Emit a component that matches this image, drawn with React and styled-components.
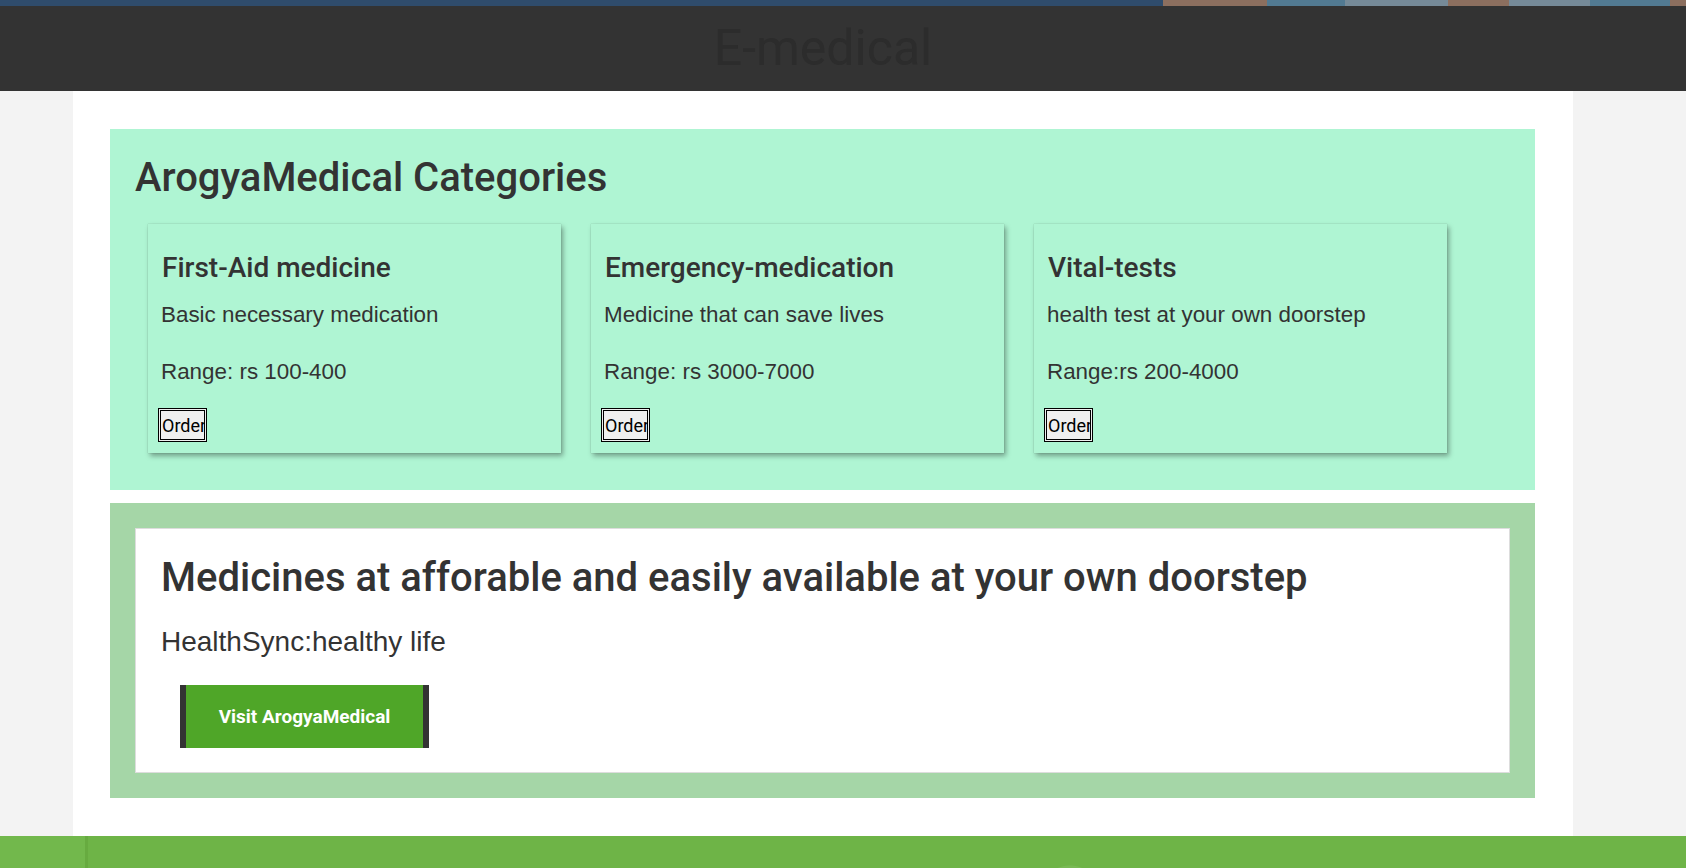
import React from "react";
import styled, { createGlobalStyle } from "styled-components";

const GlobalStyle = createGlobalStyle`
  body {
    margin: 0;
    background-color: #f3f3f3;
    font-family: Roboto, "Liberation Sans", Arial, sans-serif;
    color: #333;
  }
`;

const categories = [
  { title: "First-Aid medicine", text: "Basic necessary medication", range: "Range: rs 100-400" },
  { title: "Emergency-medication", text: "Medicine that can save lives", range: "Range: rs 3000-7000" },
  { title: "Vital-tests", text: "health test at your own doorstep", range: "Range:rs 200-4000" },
];

const App = () => {
  return (
    <>
      <GlobalStyle />
      <TopStrip />
      <Header>
        <Logo>E-medical</Logo>
      </Header>
      <Container>
        <Categories>
          <SectionTitle>ArogyaMedical Categories</SectionTitle>
          <CardRow>
            {categories.map((item) => (
              <Card key={item.title}>
                <CardTitle>{item.title}</CardTitle>
                <CardText>{item.text}</CardText>
                <CardText last>{item.range}</CardText>
                <OrderButton>Order</OrderButton>
              </Card>
            ))}
          </CardRow>
        </Categories>
        <Promo>
          <PromoBox>
            <PromoTitle>Medicines at afforable and easily available at your own doorstep</PromoTitle>
            <PromoText>HealthSync:healthy life</PromoText>
            <VisitButton>Visit ArogyaMedical</VisitButton>
          </PromoBox>
        </Promo>
      </Container>
      <Footer />
    </>
  );
};

export default App;

const TopStrip = styled.div`
  height: 6px;
  background: linear-gradient(
    to right,
    #2f4c6c 0,
    #2f4c6c 1163px,
    #8c6f5f 1163px,
    #8c6f5f 1267px,
    #527a92 1267px,
    #527a92 1345px,
    #768a98 1345px,
    #768a98 1448px,
    #8c6f5f 1448px,
    #8c6f5f 1509px,
    #768a98 1509px,
    #768a98 1590px,
    #527a92 1590px,
    #527a92 1670px,
    #8c6f5f 1670px
  );
`;

const Header = styled.header`
  height: 85px;
  background-color: #333;
`;

const Logo = styled.h1`
  width: 1500px;
  margin: 0 0 0 73px;
  text-align: center;
  font-size: 50px;
  font-weight: 400;
  line-height: 85px;
  color: #2c2c2c;
`;

const Container = styled.main`
  width: 1500px;
  margin-left: 73px;
  padding: 38px 38px 38px 37px;
  box-sizing: border-box;
  background-color: #fff;
`;

const Categories = styled.section`
  padding: 25px 25px 37px;
  background-color: #aff5d3;
`;

const SectionTitle = styled.h2`
  margin: 0;
  font-size: 40px;
  font-weight: 500;
  line-height: normal;
  color: #333;
`;

const CardRow = styled.div`
  display: flex;
  gap: 30px;
  margin: 23px 0 0 13px;
`;

const Card = styled.div`
  width: 413px;
  padding: 10px 10px 11px;
  box-sizing: border-box;
  background-color: #aff5d3;
  box-shadow: 2px 3px 5px rgba(0, 0, 0, 0.35), 0 0 1px rgba(0, 0, 0, 0.25);
`;

const CardTitle = styled.h3`
  margin: 17px 0 18px;
  padding-left: 4px;
  font-size: 28px;
  font-weight: 500;
  line-height: normal;
  color: #333;
`;

const CardText = styled.p`
  margin: 0 0 ${(props) => (props.last ? "23px" : "31px")};
  padding-left: 3px;
  font-family: "Liberation Sans", Arial, sans-serif;
  font-size: 22.4px;
  line-height: normal;
  color: #333;
`;

const OrderButton = styled.button`
  display: block;
  width: 49px;
  height: 34px;
  padding: 0 0 0 1px;
  border: 3px double #000;
  background-color: #efefef;
  font-family: Roboto, sans-serif;
  font-size: 18px;
  color: #000;
  text-align: left;
  white-space: nowrap;
  overflow: hidden;
`;

const Promo = styled.section`
  margin-top: 13px;
  padding: 25px;
  background-color: #a5d6a7;
`;

const PromoBox = styled.div`
  padding: 25px 25px 24px;
  border: 1px solid #ddd;
  background-color: #fff;
`;

const PromoTitle = styled.h2`
  margin: 0;
  font-size: 40px;
  font-weight: 500;
  line-height: normal;
  color: #333;
`;

const PromoText = styled.p`
  margin: 25px 0 27px;
  font-family: "Liberation Sans", Arial, sans-serif;
  font-size: 28px;
  line-height: normal;
  color: #333;
`;

const VisitButton = styled.button`
  display: block;
  width: 249px;
  height: 63px;
  margin-left: 19px;
  padding: 0;
  border: none;
  border-left: 6px solid #333;
  border-right: 6px solid #333;
  background-color: #4fa628;
  font-family: Roboto, sans-serif;
  font-size: 19px;
  font-weight: 700;
  color: #fff;
`;

const Footer = styled.footer`
  height: 60px;
  background-color: #6eb447;
  background-image: radial-gradient(circle at 1070px 60px, rgba(255, 255, 255, 0.08) 0, rgba(255, 255, 255, 0.08) 30px, transparent 31px),
    linear-gradient(to right, #72b84c 0, #72b84c 85px, #67ab40 85px, #67ab40 88px, #6eb447 88px);
`;
